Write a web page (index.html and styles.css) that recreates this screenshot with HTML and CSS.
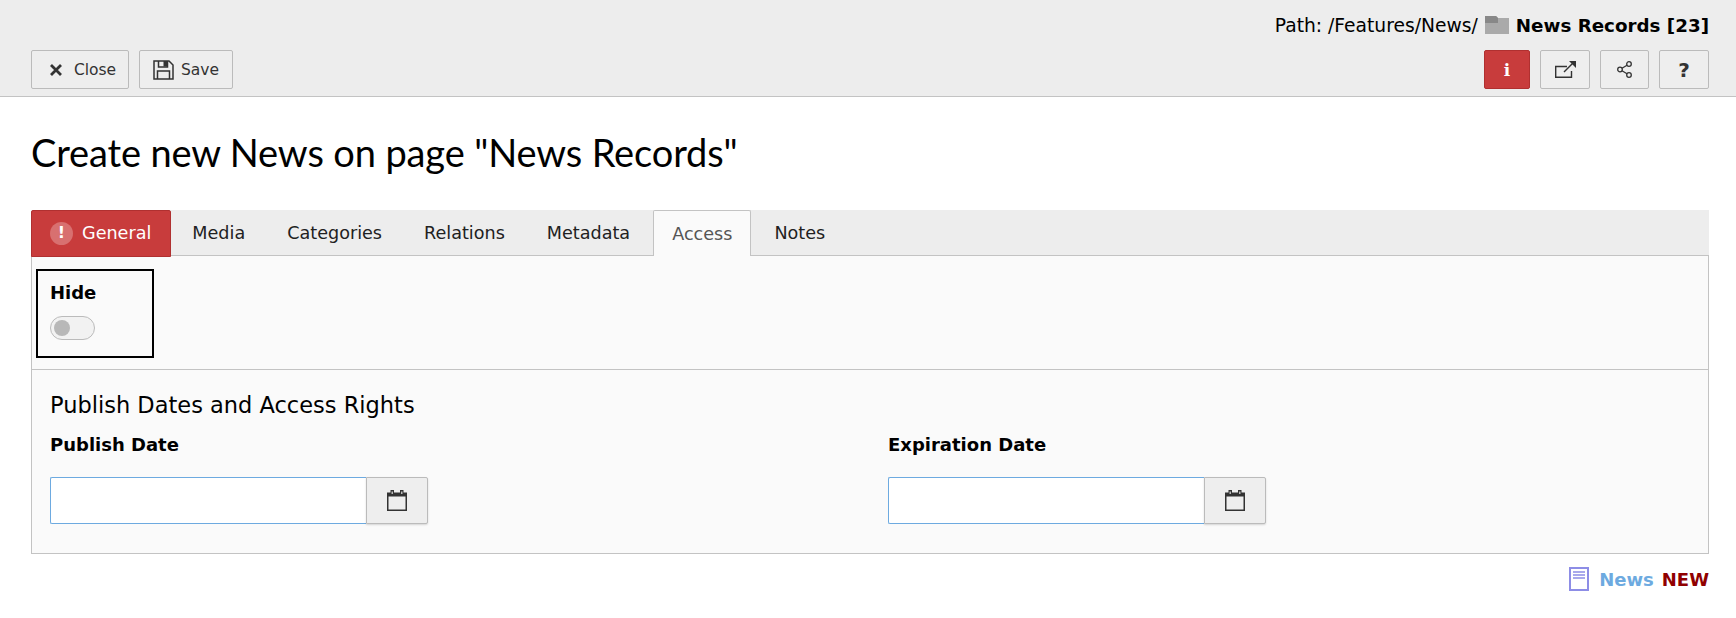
FILE: index.html
```html
<!DOCTYPE html>
<html lang="en">
<head>
    <meta charset="UTF-8">
    <meta name="viewport" content="width=device-width, initial-scale=1.0">
    <title>Create new News</title>
    <link rel="stylesheet" href="styles.css">
</head>
<body>
    <!-- Top toolbar -->
    <header class="docheader">
        <div class="path-row">
            <span class="path-label">Path: /Features/News/</span>
            <svg class="folder-icon" viewBox="0 0 24 18" width="24" height="18">
                <path d="M0 0h11l2 2h11v16H0z" fill="#aaa"/>
                <path d="M0 0h11l2 2v5H0z" fill="#888"/>
            </svg>
            <strong>News Records [23]</strong>
        </div>
        <div class="button-row">
            <div class="button-group">
                <button class="btn btn-close" type="button">
                    <svg viewBox="0 0 12 12" width="12" height="12"><path d="M1 1l10 10M11 1L1 11" stroke="#333" stroke-width="2.8" fill="none"/></svg>
                    Close
                </button>
                <button class="btn btn-save" type="button">
                    <svg viewBox="0 0 21 20" width="21" height="20">
                        <path d="M1 1h15l4 4v14H1z" fill="none" stroke="#333" stroke-width="1.500"/>
                        <path d="M5.500 1v6h9V1" fill="none" stroke="#333" stroke-width="1.500"/>
                        <path d="M10.500 1h3.500v5.500h-3.500z" fill="#333"/>
                        <path d="M4.500 19v-8h12v8" fill="none" stroke="#333" stroke-width="1.500"/>
                    </svg>
                    Save
                </button>
            </div>
            <div class="button-group">
                <button class="btn btn-icon btn-danger" type="button" aria-label="Info"><span class="glyph-i">i</span></button>
                <button class="btn btn-icon" type="button" aria-label="Open in new window">
                    <svg viewBox="0 0 21 17" width="21" height="17">
                        <path d="M12 5.500H0.700v10.800h15.800V10" fill="none" stroke="#333" stroke-width="1.400"/>
                        <path d="M9 11l8.500-8.500" fill="none" stroke="#333" stroke-width="1.400"/>
                        <path d="M14 0h7v7z" fill="#333"/>
                    </svg>
                </button>
                <button class="btn btn-icon btn-share" type="button" aria-label="Share">
                    <svg viewBox="0 0 15 17" width="15" height="17">
                        <circle cx="12" cy="3" r="2.300" fill="none" stroke="#333" stroke-width="1.300"/>
                        <circle cx="3" cy="8.500" r="2.300" fill="none" stroke="#333" stroke-width="1.300"/>
                        <circle cx="12" cy="14" r="2.300" fill="none" stroke="#333" stroke-width="1.300"/>
                        <path d="M5 7.300l5-3M5 9.700l5 3" stroke="#333" stroke-width="1.300" fill="none"/>
                    </svg>
                </button>
                <button class="btn btn-icon" type="button" aria-label="Help"><span class="glyph-help">?</span></button>
            </div>
        </div>
    </header>

    <main class="content">
        <h1>Create new News on page "News Records"</h1>

        <!-- Tabs -->
        <ul class="tabs">
            <li class="tab tab-error">
                <span class="error-badge">!</span>General
            </li>
            <li class="tab">Media</li>
            <li class="tab">Categories</li>
            <li class="tab">Relations</li>
            <li class="tab">Metadata</li>
            <li class="tab tab-active">Access</li>
            <li class="tab">Notes</li>
        </ul>

        <div class="tab-panel">
            <section class="section-hide">
                <div class="hide-field">
                    <label class="field-label">Hide</label>
                    <span class="toggle"><span class="toggle-knob"></span></span>
                </div>
            </section>
            <section class="section-dates">
                <h4>Publish Dates and Access Rights</h4>
                <div class="date-row">
                    <div class="date-field">
                        <label class="field-label">Publish Date</label>
                        <div class="input-group">
                            <input type="text">
                            <button class="calendar-btn" type="button" aria-label="Pick date">
                                <svg viewBox="0 0 20 21" width="20" height="21">
                                    <path d="M0 2.500h20V21H0z" fill="#333"/>
                                    <path d="M1.500 6.500h17v13h-17z" fill="#eee"/>
                                    <path d="M3.500 0h3.500v5h-3.500zM13 0h3.500v5H13z" fill="#333"/>
                                    <path d="M4.500 1.500h1.500v2.500h-1.500zM14 1.500h1.500v2.500H14z" fill="#bbb"/>
                                </svg>
                            </button>
                        </div>
                    </div>
                    <div class="date-field">
                        <label class="field-label">Expiration Date</label>
                        <div class="input-group">
                            <input type="text">
                            <button class="calendar-btn" type="button" aria-label="Pick date">
                                <svg viewBox="0 0 20 21" width="20" height="21">
                                    <path d="M0 2.500h20V21H0z" fill="#333"/>
                                    <path d="M1.500 6.500h17v13h-17z" fill="#eee"/>
                                    <path d="M3.500 0h3.500v5h-3.500zM13 0h3.500v5H13z" fill="#333"/>
                                    <path d="M4.500 1.500h1.500v2.500h-1.500zM14 1.500h1.500v2.500H14z" fill="#bbb"/>
                                </svg>
                            </button>
                        </div>
                    </div>
                </div>
            </section>
        </div>

        <div class="record-info">
            <svg class="record-icon" viewBox="0 0 20 24" width="20" height="24">
                <path d="M1 1h18v22H1z" fill="#fff" stroke="#8d8de6" stroke-width="2"/>
                <path d="M4 5h12M4 8h12M4 11h12" stroke="#8d8de6" stroke-width="1.500"/>
            </svg>
            <span class="record-type">News</span>
            <span class="record-new">NEW</span>
        </div>
    </main>
</body>
</html>
```

FILE: styles.css
```css
body {
    margin: 0;
    font-family: "DejaVu Sans", Verdana, sans-serif;
    font-size: 18px;
    color: #000;
    background-color: #fff;
}
.docheader {
    height: 97px;
    box-sizing: border-box;
    padding: 0 27px 0 31px;
    background-color: #ededed;
    border-bottom: 1px solid #c3c3c3;
}
.path-row {
    display: flex;
    justify-content: flex-end;
    align-items: center;
    height: 50px;
}
.path-label {
    font-size: 18.7px;
}
.path-row strong {
    font-size: 18.3px;
}
.folder-icon {
    margin: 0 7px;
}
.button-row {
    display: flex;
    justify-content: space-between;
}
.button-group {
    display: flex;
    gap: 10px;
}
.btn {
    display: flex;
    align-items: center;
    justify-content: center;
    height: 39px;
    box-sizing: border-box;
    padding: 0;
    font-family: inherit;
    font-size: 15.5px;
    color: #333;
    background-color: #eee;
    border: 1px solid #bbb;
    border-radius: 2px;
}
.btn-close {
    width: 98px;
    gap: 12px;
    padding-left: 6px;
}
.btn-save {
    width: 94px;
    gap: 7px;
}
.btn-icon {
    width: 50px;
}
.btn-share {
    width: 49px;
}
.btn-danger {
    width: 46px;
    color: #fff;
    background-color: #c83c3c;
    border-color: #b03030;
}
.glyph-i {
    font-family: "DejaVu Serif", serif;
    font-weight: bold;
    font-size: 17px;
}
.glyph-help {
    font-weight: bold;
    font-size: 20px;
}
.content {
    padding: 0 27px 0 31px;
}
h1 {
    margin: 0;
    padding-top: 30px;
    height: 83px;
    font-family: Lato, sans-serif;
    font-size: 38px;
    font-weight: 400;
    letter-spacing: -0.13px;
    line-height: 50px;
}
.tabs {
    display: flex;
    margin: 0;
    padding: 0;
    height: 46px;
    box-sizing: border-box;
    list-style: none;
    background-color: #ededed;
    border-bottom: 1px solid #c3c3c3;
}
.tab {
    display: flex;
    align-items: center;
    height: 46px;
    box-sizing: border-box;
    padding: 0 21px;
    font-size: 17.6px;
    color: #212121;
}
.tab-error {
    gap: 9px;
    height: 47px;
    padding: 0 19px 1px 18px;
    color: #fff;
    background-color: #c83c3c;
    border: 1px solid #b03030;
    border-radius: 2px 2px 0 0;
}
.error-badge {
    width: 23px;
    height: 23px;
    font-weight: bold;
    font-size: 16px;
    line-height: 21px;
    text-align: center;
    background-color: #d87070;
    border-radius: 50%;
}
.tab-active {
    margin: 0 2px;
    padding: 0 18px;
    color: #555;
    background-color: #fafafa;
    border: 1px solid #c3c3c3;
    border-bottom: none;
    border-radius: 2px 2px 0 0;
}
.tab-panel {
    background-color: #fafafa;
    border: 1px solid #c3c3c3;
    border-top: none;
}
.section-hide {
    height: 114px;
    box-sizing: border-box;
    padding: 13px 4px 0;
    border-bottom: 1px solid #c3c3c3;
}
.hide-field {
    width: 118px;
    height: 89px;
    box-sizing: border-box;
    padding: 11px 12px;
    border: 2px solid #000;
}
.field-label {
    display: block;
    font-weight: bold;
    line-height: 22px;
}
.toggle {
    display: block;
    position: relative;
    box-sizing: border-box;
    width: 45px;
    height: 24px;
    margin-top: 12px;
    background-color: #f2f2f2;
    border: 1px solid #bbb;
    border-radius: 12px;
}
.toggle-knob {
    position: absolute;
    left: 3px;
    top: 3px;
    width: 16px;
    height: 16px;
    background-color: #b8b8b8;
    border-radius: 50%;
}
.section-dates {
    height: 183px;
    box-sizing: border-box;
    padding: 21px 18px 0;
}
h4 {
    margin: 0;
    font-size: 22.5px;
    font-weight: 400;
    line-height: 28px;
}
.date-row {
    display: flex;
    gap: 460px;
    margin-top: 15px;
}
.date-field {
    width: 378px;
}
.date-field .field-label {
    margin-bottom: 21px;
}
.input-group {
    display: flex;
    height: 47px;
}
.input-group input {
    flex: 1;
    min-width: 0;
    box-sizing: border-box;
    padding: 0;
    background-color: #fff;
    border: 1px solid #6daae0;
    border-right: none;
    border-radius: 2px 0 0 2px;
}
.calendar-btn {
    display: flex;
    align-items: center;
    justify-content: center;
    width: 62px;
    padding: 0 1px 0 0;
    background-color: #eee;
    border: 1px solid #bbb;
    border-radius: 0 2px 2px 0;
    box-shadow: 0 1px 2px rgba(0, 0, 0, 0.15);
}
.record-info {
    display: flex;
    justify-content: flex-end;
    align-items: center;
    gap: 8px;
    height: 50px;
    font-weight: bold;
}
.record-icon {
    margin-right: 2px;
}
.record-type {
    color: #6daae0;
}
.record-new {
    color: #900000;
}
```
